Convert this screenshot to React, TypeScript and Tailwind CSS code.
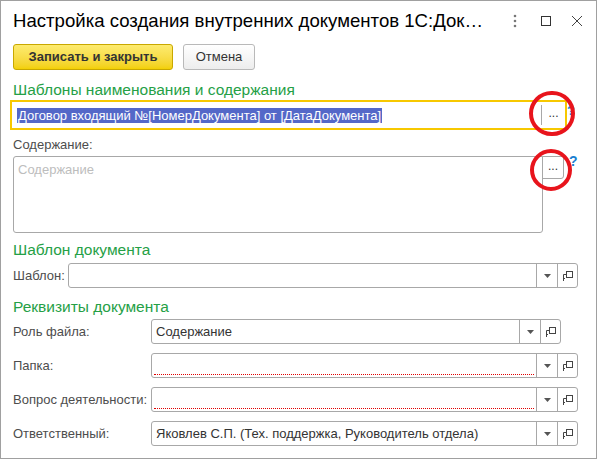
import React from "react";

const font = { fontFamily: '"Liberation Sans", Arial, sans-serif' };

function Arrow() {
  return (
    <svg width="7" height="4" viewBox="0 0 7 4">
      <path d="M0 0 H7 L3.5 4 Z" fill="#555" />
    </svg>
  );
}

function OpenIcon() {
  return (
    <svg width="12" height="12" viewBox="0 0 12 12" fill="none" stroke="#444" strokeWidth="1">
      <rect x="4.5" y="1.5" width="6" height="6" />
      <path d="M1.5 11 V4.5 H4.5" />
      <path d="M1.5 8.5 H3" />
    </svg>
  );
}

function Field({
  width,
  text,
  required,
  open = true,
}: {
  width: string;
  text?: string;
  required?: boolean;
  open?: boolean;
}) {
  return (
    <div className={`flex h-[25px] ${width} border border-[#a8a8a8] rounded-[3px] bg-white`}>
      <div className="relative flex-1 flex items-center pl-[4px] text-[13px] text-[#333] overflow-hidden whitespace-nowrap">
        {text}
        {required && (
          <div className="absolute left-[2px] right-[2px] bottom-[2px] border-b border-dotted border-[#e00000]" />
        )}
      </div>
      <div className="w-[21px] border-l border-[#a8a8a8] flex items-center justify-center">
        <Arrow />
      </div>
      {open && (
        <div className="w-[20px] border-l border-[#a8a8a8] flex items-center justify-center">
          <OpenIcon />
        </div>
      )}
    </div>
  );
}

function Row({ label, children }: { label: string; children: React.ReactNode }) {
  return (
    <div className="flex items-center h-[25px]">
      <div className="w-[138px] text-[13px] text-[#4d4d4d]">{label}</div>
      {children}
    </div>
  );
}

export default function App() {
  return (
    <div className="w-[598px] h-[460px] bg-white" style={font}>
      <div className="relative w-[597px] h-[459px] border border-[#a0a0a0] bg-white">
        {/* Title bar */}
        <div className="flex items-center h-[40px] pl-[12px] pr-[4px]">
          <div className="flex-1 text-[18.6px] text-black whitespace-nowrap">
            Настройка создания внутренних документов 1С:Док…
          </div>
          <div className="flex items-center gap-[0px]">
            <div className="w-[31px] flex justify-center">
              <svg width="4" height="14" viewBox="0 0 4 14">
                <circle cx="2" cy="2" r="1.3" fill="#777" />
                <circle cx="2" cy="7" r="1.3" fill="#777" />
                <circle cx="2" cy="12" r="1.3" fill="#777" />
              </svg>
            </div>
            <div className="w-[31px] flex justify-center">
              <svg width="12" height="12" viewBox="0 0 12 12">
                <rect x="1.5" y="1.5" width="9" height="9" fill="none" stroke="#333" strokeWidth="1" />
              </svg>
            </div>
            <div className="w-[31px] flex justify-center">
              <svg width="12" height="12" viewBox="0 0 12 12">
                <path d="M1 1 L11 11 M11 1 L1 11" stroke="#444" strokeWidth="1" />
              </svg>
            </div>
          </div>
        </div>

        {/* Buttons */}
        <div className="flex items-center gap-[10px] pl-[12px] mt-[3px]">
          <div className="h-[26px] w-[160px] flex items-center justify-center rounded-[3px] border border-[#c9a800] bg-gradient-to-b from-[#fdeb6e] to-[#f3d000] text-[13px] text-[#333] font-bold">
            Записать и закрыть
          </div>
          <div className="h-[26px] w-[72px] flex items-center justify-center rounded-[3px] border border-[#b9b9b9] bg-gradient-to-b from-white to-[#ededed] text-[13px] text-[#333]">
            Отмена
          </div>
        </div>

        {/* Section 1 */}
        <div className="pl-[12px] mt-[11px] text-[15.5px] leading-[18px] text-[#25a046]">
          Шаблоны наименования и содержания
        </div>
        <div className="ml-[9px] mt-[1px] flex items-center h-[30px] w-[557px] border-2 border-[#f7c800] bg-white">
          <div className="flex-1 pl-[5px] flex items-center">
            <span className="bg-[#5468c8] text-white text-[13px] leading-[15px] px-[1px]">
              Договор входящий №[НомерДокумента] от [ДатаДокумента]
            </span>
          </div>
          <div className="h-[20px] w-[24px] border-l border-[#a8a8a8] flex items-center justify-center text-[12px] text-[#333] leading-none pb-[4px]">
            ...
          </div>
        </div>

        <div className="pl-[12px] mt-[7px] text-[13px] leading-[16px] text-[#4d4d4d]">Содержание:</div>
        <div className="flex ml-[12px] mt-[3px]">
          <div className="h-[77px] w-[530px] border border-[#a8a8a8] rounded-l-[3px] rounded-br-[3px] pl-[4px] pt-[3px] text-[13px] text-[#bdbdbd]">
            Содержание
          </div>
          <div className="h-[23px] w-[22px] -ml-[1px] border border-[#a8a8a8] rounded-br-[3px] flex items-center justify-center text-[12px] text-[#333] leading-none pb-[4px]">
            ...
          </div>
          <div className="ml-[5px] -mt-[3px] text-[14px] leading-[16px] font-bold text-[#1a7fd1]">?</div>
        </div>

        {/* Section 2 */}
        <div className="pl-[12px] mt-[8px] text-[15.5px] leading-[18px] text-[#25a046]">Шаблон документа</div>
        <div className="flex items-center h-[25px] pl-[12px] mt-[4px]">
          <div className="w-[55px] text-[13px] text-[#4d4d4d]">Шаблон:</div>
          <Field width="w-[510px]" />
        </div>

        {/* Section 3 */}
        <div className="pl-[12px] mt-[10px] text-[15.5px] leading-[18px] text-[#25a046]">Реквизиты документа</div>
        <div className="flex flex-col gap-[9px] pl-[12px] mt-[3px]">
          <Row label="Роль файла:">
            <Field width="w-[410px]" text="Содержание" />
          </Row>
          <Row label="Папка:">
            <Field width="w-[427px]" required />
          </Row>
          <Row label="Вопрос деятельности:">
            <Field width="w-[427px]" required />
          </Row>
          <Row label="Ответственный:">
            <Field width="w-[427px]" text="Яковлев С.П. (Тех. поддержка, Руководитель отдела)" />
          </Row>
        </div>

        {/* Help mark under the annotation, then red circle annotations */}
        <div className="absolute left-[566px] top-[103px] text-[13px] font-bold text-[#1a7fd1] leading-none">?</div>
        <div className="absolute left-[528px] top-[90px] w-[46px] h-[45px] rounded-full border-[4px] border-[#e8141c]" />
        <div className="absolute left-[529px] top-[148px] w-[42px] h-[42px] rounded-full border-[4px] border-[#e8141c]" />
      </div>
    </div>
  );
}
